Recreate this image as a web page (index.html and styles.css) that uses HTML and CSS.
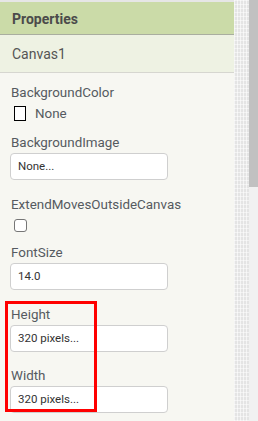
FILE: index.html
```html
<!DOCTYPE html>
<html lang="en">

<head>
    <meta charset="UTF-8">
    <meta name="viewport" content="width=device-width, initial-scale=1.0">
    <title>Properties</title>
    <link rel="stylesheet" href="styles.css">
</head>

<body>
    <div class="layout">
        <div class="panel">
            <div class="panel-header">Properties</div>
            <div class="component-name">Canvas1</div>

            <div class="prop-list">
                <div class="prop prop-color">
                    <div class="prop-label">BackgroundColor</div>
                    <div class="color-row">
                        <span class="swatch"></span>
                        <span class="color-name">None</span>
                    </div>
                </div>

                <div class="prop">
                    <div class="prop-label">BackgroundImage</div>
                    <div class="text-box">None...</div>
                </div>

                <div class="prop prop-check">
                    <div class="prop-label">ExtendMovesOutsideCanvas</div>
                    <input type="checkbox" class="check">
                </div>

                <div class="prop">
                    <div class="prop-label">FontSize</div>
                    <div class="text-box">14.0</div>
                </div>

                <div class="prop-group">
                    <span class="highlight"></span>
                    <div class="prop">
                        <div class="prop-label">Height</div>
                        <div class="text-box">320 pixels...</div>
                    </div>

                    <div class="prop">
                        <div class="prop-label">Width</div>
                        <div class="text-box">320 pixels...</div>
                    </div>
                </div>
            </div>
        </div>

        <div class="gutter"></div>

        <div class="scrollbar">
            <div class="thumb"></div>
        </div>
    </div>
</body>

</html>
```

FILE: styles.css
```css
body {
    margin: 0;
    padding: 0;
    font-family: Roboto, "Liberation Sans", sans-serif;
    background-color: #f7f7f2;
    overflow: hidden;
}

.layout {
    display: flex;
    height: 421px;
}

.panel {
    width: 234px;
    flex-shrink: 0;
    border-top: 2px solid #e6e6e6;
    background-color: #f7f7f2;
}

.panel-header {
    height: 30px;
    padding: 2px 12px 0;
    line-height: 30px;
    font-size: 14px;
    font-weight: bold;
    color: #4b4b4b;
    background-color: #cbdba8;
    border-bottom: 1px solid #a9ae9f;
}

.component-name {
    height: 36px;
    padding: 1px 12px 0;
    line-height: 36px;
    font-size: 14px;
    color: #555;
    background-color: #eef2e3;
    border-bottom: 1px solid #d6d6d0;
}

.prop-list {
    padding: 12px 10px 0;
}

.prop {
    margin-bottom: 16.5px;
}

.prop-color {
    margin-bottom: 14px;
}

.prop-check {
    margin-bottom: 13.5px;
}

.prop-label {
    padding-left: 1px;
    line-height: 16px;
    font-size: 13.4px;
    color: #555a60;
}

.color-row {
    display: flex;
    align-items: center;
    height: 15px;
    margin-top: 5px;
}

.swatch {
    width: 10px;
    height: 13px;
    margin-left: 4px;
    border: 1px solid #000;
    background-color: #fff;
}

.color-name {
    margin-left: 9px;
    font-size: 13.4px;
    color: #555a60;
}

.text-box {
    box-sizing: border-box;
    width: 158px;
    height: 27px;
    margin-top: 2px;
    padding-left: 7px;
    line-height: 25px;
    font-size: 11.5px;
    color: #333;
    background-color: #fff;
    border: 1px solid #cfcfcf;
    border-radius: 4px;
}

.check {
    appearance: none;
    display: block;
    width: 13px;
    height: 13px;
    margin: 6px 0 0 4px;
    border: 1px solid #767676;
    border-radius: 3px;
    background-color: #fff;
}

.prop-group {
    position: relative;
}

.highlight {
    position: absolute;
    top: -6px;
    left: -5px;
    width: 86px;
    height: 105px;
    border: 3px solid #ff0000;
}

.gutter {
    width: 15px;
    flex-shrink: 0;
    background-color: #e4e4e4;
    background-image:
        repeating-linear-gradient(90deg, rgba(255, 255, 255, 0.6) 0 1px, transparent 1px 3px),
        repeating-linear-gradient(0deg, rgba(255, 255, 255, 0.5) 0 1px, transparent 1px 4px);
}

.scrollbar {
    flex: 1;
    background-color: #f1f1f1;
}

.thumb {
    height: 187px;
    background-color: #c1c1c1;
}
```
